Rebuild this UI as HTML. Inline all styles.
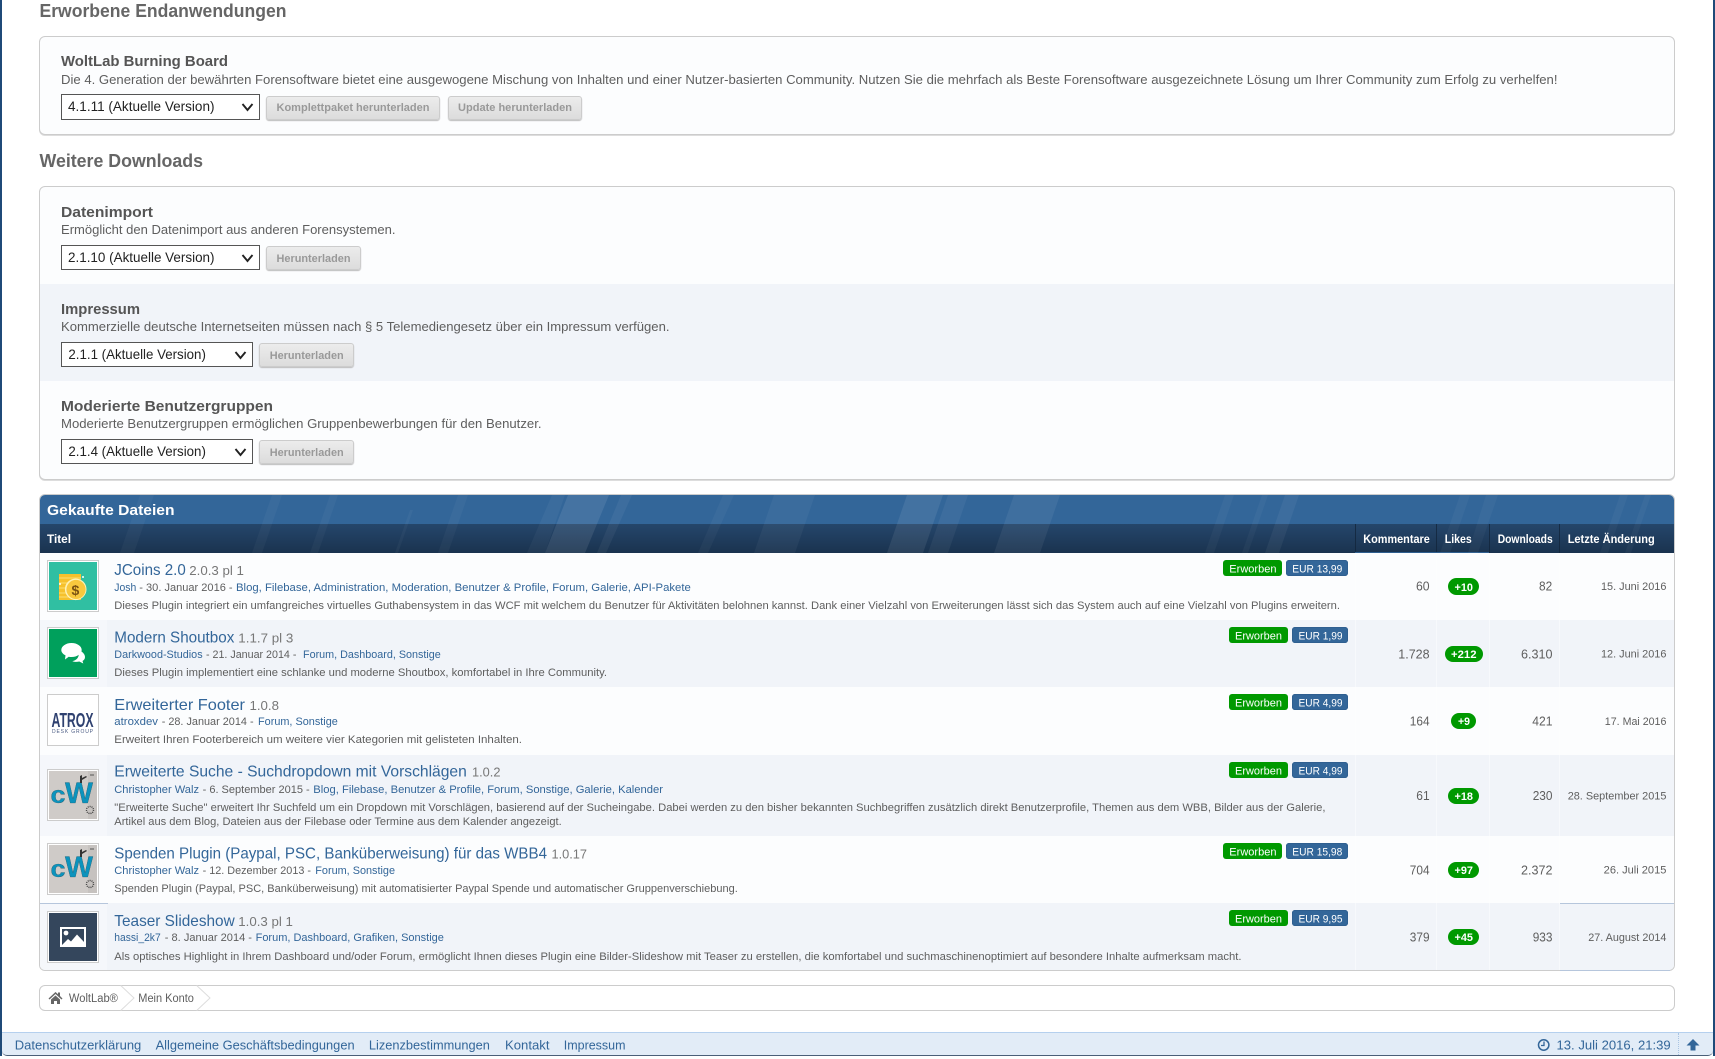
<!DOCTYPE html>
<html lang="de"><head><meta charset="utf-8"><title>Mein Konto</title>
<style>
html,body{margin:0;padding:0;width:1715px;height:1059px;overflow:hidden;background:#fff}
.a{position:absolute;box-sizing:border-box}
.box{border:1px solid #ccc;border-radius:6px;background:#fcfdfe;box-shadow:0 1px 0 #ddd}
.sel{background:#fff;border:1px solid #555}
.btn{background:linear-gradient(#ececec,#dcdcdc);border:1px solid #ccc;border-radius:3px;box-shadow:0 1px 1px #bbb}
.th{border:1px solid #ccc;background:#fff}
.g{background:#090;border-radius:3px}
.b{background:#369;border-radius:3px;box-shadow:inset 0 0 0 1px #2f5f90}
.p{background:#090;border-radius:9px}
.alt{background:#f1f4f9}
.alt1{background:#f5f7fb}
svg{position:absolute;left:0;top:0}
text{font-family:"Liberation Sans",sans-serif;fill:#5e5e5e;white-space:pre}
.h1{font-size:18px;font-weight:bold;fill:#666}
.h2{font-size:15px;font-weight:bold;fill:#555}
.d{font-size:13px}
.s{font-size:14px;fill:#222}
.bt{font-size:11px;font-weight:bold;fill:#999}
.w1{font-size:15px;font-weight:bold;fill:#fff}
.w2{font-size:11.5px;font-weight:bold;fill:#fff}
.t{font-size:16px;fill:#369}
.v{font-size:13px;fill:#777}
.m{font-size:11px}
.l{font-size:11px;fill:#369}
.x{font-size:11px}
.n{font-size:13px}
.bw{font-size:11px;fill:#fff}
.pw{font-size:11px;font-weight:bold;fill:#fff}
.f{font-size:13px;fill:#369}
.bc{font-size:11.5px}
</style></head><body>

<div class="a" style="left:0;top:0;width:2px;height:1056px;background:#1f4a78"></div>
<div class="a" style="left:1713px;top:0;width:2px;height:1056px;background:#1f4a78"></div>

<!-- Boxes -->
<div class="a box" style="left:39px;top:36px;width:1636px;height:99px"></div>
<div class="a box" style="left:39px;top:186px;width:1636px;height:294px"></div>
<div class="a alt" style="left:40px;top:284px;width:1634px;height:97px"></div>

<div class="a sel" style="left:61px;top:94px;width:199px;height:26px"></div>
<div class="a btn" style="left:266px;top:96px;width:174px;height:24px"></div>
<div class="a btn" style="left:448px;top:96px;width:134px;height:24px"></div>
<div class="a sel" style="left:61px;top:245px;width:199px;height:25px"></div>
<div class="a btn" style="left:266px;top:246px;width:95px;height:24px"></div>
<div class="a sel" style="left:61px;top:342px;width:192px;height:25px"></div>
<div class="a btn" style="left:259px;top:343px;width:95px;height:24px"></div>
<div class="a sel" style="left:61px;top:439px;width:192px;height:25px"></div>
<div class="a btn" style="left:259px;top:440px;width:95px;height:24px"></div>

<!-- Table -->
<div class="a" style="left:39px;top:494px;width:1636px;height:477px;border:1px solid #ccc;border-radius:6px;background:#fcfdfe;overflow:hidden">
  <div class="a" style="left:0;top:0;width:1634px;height:29px;background:#336699"></div>
  <div class="a" style="left:0;top:29px;width:1634px;height:29px;background:linear-gradient(#25466b,#1a334f)"></div>
  <div class="a alt" style="left:0;top:125px;width:1634px;height:67px"></div>
  <div class="a alt1" style="left:0;top:125px;width:67px;height:67px"></div>
  <div class="a alt" style="left:0;top:260px;width:1634px;height:81px"></div>
  <div class="a alt1" style="left:0;top:260px;width:67px;height:81px"></div>
  <div class="a alt" style="left:0;top:408px;width:1634px;height:67px"></div>
  <div class="a alt1" style="left:0;top:408px;width:67px;height:67px"></div>
  <div class="a" style="left:0;top:408px;width:68px;height:1px;background:#b6c6dc"></div>
  <div class="a" style="left:1520px;top:408px;width:114px;height:1px;background:#b6c6dc"></div>
  <div class="a" style="left:1315px;top:58px;width:1px;height:417px;background:rgba(255,255,255,.45)"></div>
  <div class="a" style="left:1396px;top:58px;width:1px;height:417px;background:rgba(255,255,255,.45)"></div>
  <div class="a" style="left:1449px;top:58px;width:1px;height:417px;background:rgba(255,255,255,.45)"></div>
  <div class="a" style="left:1519px;top:58px;width:1px;height:417px;background:rgba(255,255,255,.45)"></div>
  <div class="a" style="left:1315px;top:29px;width:1px;height:29px;background:rgba(18,36,58,.75)"></div>
  <div class="a" style="left:1396px;top:29px;width:1px;height:29px;background:rgba(18,36,58,.75)"></div>
  <div class="a" style="left:1449px;top:29px;width:1px;height:29px;background:rgba(18,36,58,.75)"></div>
  <div class="a" style="left:1519px;top:29px;width:1px;height:29px;background:rgba(18,36,58,.75)"></div>
  <div class="a" style="left:1315px;top:57px;width:134px;height:1px;background:#2f5f90"></div>
</div>

<!-- Thumbs -->
<div class="a th" style="left:47px;top:560px;width:52px;height:52px"></div>
<div class="a th" style="left:47px;top:627px;width:52px;height:52px"></div>
<div class="a th" style="left:47px;top:694px;width:52px;height:52px"></div>
<div class="a th" style="left:47px;top:769px;width:52px;height:52px"></div>
<div class="a th" style="left:47px;top:843px;width:52px;height:52px"></div>
<div class="a th" style="left:47px;top:911px;width:52px;height:52px"></div>

<!-- Badges -->
<div class="a g" style="left:1223px;top:560px;width:59px;height:16px"></div><div class="a b" style="left:1286px;top:560px;width:62px;height:16px"></div>
<div class="a g" style="left:1229px;top:627px;width:59px;height:16px"></div><div class="a b" style="left:1292px;top:627px;width:56px;height:16px"></div>
<div class="a g" style="left:1229px;top:694px;width:59px;height:16px"></div><div class="a b" style="left:1292px;top:694px;width:56px;height:16px"></div>
<div class="a g" style="left:1229px;top:762px;width:59px;height:16px"></div><div class="a b" style="left:1292px;top:762px;width:56px;height:16px"></div>
<div class="a g" style="left:1223px;top:843px;width:59px;height:16px"></div><div class="a b" style="left:1286px;top:843px;width:62px;height:16px"></div>
<div class="a g" style="left:1229px;top:910px;width:59px;height:16px"></div><div class="a b" style="left:1292px;top:910px;width:56px;height:16px"></div>

<!-- Pills -->
<div class="a p" style="left:1448px;top:578px;width:31px;height:17px"></div>
<div class="a p" style="left:1445px;top:646px;width:38px;height:16px"></div>
<div class="a p" style="left:1451px;top:713px;width:25px;height:16px"></div>
<div class="a p" style="left:1448px;top:788px;width:31px;height:16px"></div>
<div class="a p" style="left:1448px;top:862px;width:31px;height:16px"></div>
<div class="a p" style="left:1448px;top:929px;width:31px;height:16px"></div>

<!-- Breadcrumbs -->
<div class="a" style="left:39px;top:985px;width:1636px;height:26px;border:1px solid #ccc;border-radius:6px;background:#fff"></div>

<!-- Footer -->
<div class="a" style="left:2px;top:1032px;width:1711px;height:24px;background:#e2ecf7;border-top:1px solid #b5d0ee;border-bottom:1px solid #4a5f78;border-radius:0 0 5px 5px"></div>
<div class="a" style="left:1678px;top:1033px;width:0;height:22px;border-left:1px dotted #a9c4e2"></div>

<svg width="1715" height="1059" viewBox="0 0 1715 1059" xmlns="http://www.w3.org/2000/svg">
<defs><clipPath id="hc"><path d="M40 553V501q0-6 6-6H1668q6 0 6 6V553Z"/></clipPath></defs>

<!-- header streaks -->
<g clip-path="url(#hc)" fill="#fff">
<path opacity=".035" d="M140 495h14l-20 58h-14zM272 495h10l-20 58h-10zM330 495h8l-20 58h-8z"/>
<path opacity=".035" d="M458 495h10l-20 58h-10zM410 510h3l-15 43h-3z"/>
<path opacity=".04" d="M552 495h13l-20 58h-18z"/>
<path opacity=".09" d="M568 495h41l-24 58h-40z"/>
<path opacity=".05" d="M621 495h11l-26 58h-9z"/>
<path opacity=".035" d="M723 495h11l-26 58h-10z"/>
<path opacity=".045" d="M774 495h41l-20 58h-41z"/>
<path opacity=".08" d="M907 495h36l-20 58h-36z"/>
<path opacity=".05" d="M948 495h20l-20 58h-20z"/>
<path opacity=".06" d="M1014 495h46l-20 58h-46z"/>
<path opacity=".035" d="M1225 495h9l-20 58h-9zM1262 495h6l-20 58h-6z"/>
<path opacity=".05" d="M1285 495h14l-20 58h-14z"/>
<path opacity=".035" d="M1460 495h10l-20 58h-10zM1486 495h12l-20 58h-10z"/>
<path opacity=".035" d="M1620 495h8l-20 58h-8zM1645 495h6l-20 58h-6z"/>
</g>

<!-- top section -->
<text class="h1" x="39.5" y="17" textLength="247" lengthAdjust="spacingAndGlyphs">Erworbene Endanwendungen</text>
<text class="h2" x="61" y="66" textLength="167" lengthAdjust="spacingAndGlyphs">WoltLab Burning Board</text>
<text class="d" x="61" y="84" textLength="1496.5" lengthAdjust="spacingAndGlyphs">Die 4. Generation der bewährten Forensoftware bietet eine ausgewogene Mischung von Inhalten und einer Nutzer-basierten Community. Nutzen Sie die mehrfach als Beste Forensoftware ausgezeichnete Lösung um Ihrer Community zum Erfolg zu verhelfen!</text>
<text class="s" x="68" y="111" textLength="146.5" lengthAdjust="spacingAndGlyphs">4.1.11 (Aktuelle Version)</text>
<text class="bt" x="276.5" y="111" textLength="153" lengthAdjust="spacingAndGlyphs">Komplettpaket herunterladen</text>
<text class="bt" x="458" y="111" textLength="114" lengthAdjust="spacingAndGlyphs">Update herunterladen</text>

<text class="h1" x="39.5" y="167" textLength="163.5" lengthAdjust="spacingAndGlyphs">Weitere Downloads</text>
<text class="h2" x="61" y="217" textLength="92" lengthAdjust="spacingAndGlyphs">Datenimport</text>
<text class="d" x="61" y="234" textLength="334.5" lengthAdjust="spacingAndGlyphs">Ermöglicht den Datenimport aus anderen Forensystemen.</text>
<text class="s" x="68" y="262" textLength="146.5" lengthAdjust="spacingAndGlyphs">2.1.10 (Aktuelle Version)</text>
<text class="bt" x="276.5" y="262" textLength="74" lengthAdjust="spacingAndGlyphs">Herunterladen</text>

<text class="h2" x="61" y="314" textLength="79" lengthAdjust="spacingAndGlyphs">Impressum</text>
<text class="d" x="61" y="331" textLength="608.5" lengthAdjust="spacingAndGlyphs">Kommerzielle deutsche Internetseiten müssen nach § 5 Telemediengesetz über ein Impressum verfügen.</text>
<text class="s" x="68.4" y="359" textLength="137.5" lengthAdjust="spacingAndGlyphs">2.1.1 (Aktuelle Version)</text>
<text class="bt" x="269.7" y="359" textLength="74" lengthAdjust="spacingAndGlyphs">Herunterladen</text>

<text class="h2" x="61" y="411" textLength="212" lengthAdjust="spacingAndGlyphs">Moderierte Benutzergruppen</text>
<text class="d" x="61" y="428" textLength="480.5" lengthAdjust="spacingAndGlyphs">Moderierte Benutzergruppen ermöglichen Gruppenbewerbungen für den Benutzer.</text>
<text class="s" x="68.4" y="456" textLength="137.5" lengthAdjust="spacingAndGlyphs">2.1.4 (Aktuelle Version)</text>
<text class="bt" x="269.7" y="456" textLength="74" lengthAdjust="spacingAndGlyphs">Herunterladen</text>

<!-- chevrons -->
<g fill="none" stroke="#222" stroke-width="1.9">
<path d="M242.5 104l5 6 5-6"/><path d="M242.5 255l5 6 5-6"/><path d="M235.5 352l5 6 5-6"/><path d="M235.5 449l5 6 5-6"/>
</g>

<!-- table head -->
<text class="w1" x="47" y="515" textLength="127.5" lengthAdjust="spacingAndGlyphs">Gekaufte Dateien</text>
<text class="w2" x="47" y="543" textLength="24" lengthAdjust="spacingAndGlyphs">Titel</text>
<text class="w2" x="1363.3" y="543" textLength="66.5" lengthAdjust="spacingAndGlyphs">Kommentare</text>
<text class="w2" x="1444.8" y="543" textLength="27" lengthAdjust="spacingAndGlyphs">Likes</text>
<text class="w2" x="1497.7" y="543" textLength="55" lengthAdjust="spacingAndGlyphs">Downloads</text>
<text class="w2" x="1567.7" y="543" textLength="87" lengthAdjust="spacingAndGlyphs">Letzte Änderung</text>

<!-- row 1 -->
<text class="t" x="114.3" y="575" textLength="71.5" lengthAdjust="spacingAndGlyphs">JCoins 2.0</text>
<text class="v" x="189.3" y="575" textLength="54.6" lengthAdjust="spacingAndGlyphs">2.0.3 pl 1</text>
<text class="l" x="114.3" y="591" textLength="22" lengthAdjust="spacingAndGlyphs">Josh</text>
<text class="m" x="139.3" y="591" textLength="93.3" lengthAdjust="spacingAndGlyphs">- 30. Januar 2016 -</text>
<text class="l" x="236" y="591" textLength="454.8" lengthAdjust="spacingAndGlyphs">Blog, Filebase, Administration, Moderation, Benutzer &amp; Profile, Forum, Galerie, API-Pakete</text>
<text class="m" x="114.3" y="609" textLength="1225.7" lengthAdjust="spacingAndGlyphs">Dieses Plugin integriert ein umfangreiches virtuelles Guthabensystem in das WCF mit welchem du Benutzer für Aktivitäten belohnen kannst. Dank einer Vielzahl von Erweiterungen lässt sich das System auch auf eine Vielzahl von Plugins erweitern.</text>
<!-- row 2 -->
<text class="t" x="114.3" y="642.5" textLength="120" lengthAdjust="spacingAndGlyphs">Modern Shoutbox</text>
<text class="v" x="238.3" y="642.5" textLength="55" lengthAdjust="spacingAndGlyphs">1.1.7 pl 3</text>
<text class="l" x="114.3" y="658" textLength="88.3" lengthAdjust="spacingAndGlyphs">Darkwood-Studios</text>
<text class="m" x="206" y="658" textLength="90.4" lengthAdjust="spacingAndGlyphs">- 21. Januar 2014 -</text>
<text class="l" x="303" y="658" textLength="137.8" lengthAdjust="spacingAndGlyphs">Forum, Dashboard, Sonstige</text>
<text class="m" x="114.3" y="676" textLength="492.7" lengthAdjust="spacingAndGlyphs">Dieses Plugin implementiert eine schlanke und moderne Shoutbox, komfortabel in Ihre Community.</text>
<!-- row 3 -->
<text class="t" x="114.3" y="710" textLength="130.7" lengthAdjust="spacingAndGlyphs">Erweiterter Footer</text>
<text class="v" x="249.5" y="710" textLength="29.5" lengthAdjust="spacingAndGlyphs">1.0.8</text>
<text class="l" x="114.3" y="725" textLength="43.7" lengthAdjust="spacingAndGlyphs">atroxdev</text>
<text class="m" x="161.7" y="725" textLength="91.9" lengthAdjust="spacingAndGlyphs">- 28. Januar 2014 -</text>
<text class="l" x="258" y="725" textLength="79.8" lengthAdjust="spacingAndGlyphs">Forum, Sonstige</text>
<text class="m" x="114.3" y="743" textLength="407.7" lengthAdjust="spacingAndGlyphs">Erweitert Ihren Footerbereich um weitere vier Kategorien mit gelisteten Inhalten.</text>
<!-- row 4 -->
<text class="t" x="114.3" y="776.5" textLength="352.5" lengthAdjust="spacingAndGlyphs">Erweiterte Suche - Suchdropdown mit Vorschlägen</text>
<text class="v" x="472" y="776.5" textLength="28.5" lengthAdjust="spacingAndGlyphs">1.0.2</text>
<text class="l" x="114.3" y="793" textLength="84.7" lengthAdjust="spacingAndGlyphs">Christopher Walz</text>
<text class="m" x="202.6" y="793" textLength="107.1" lengthAdjust="spacingAndGlyphs">- 6. September 2015 -</text>
<text class="l" x="313.3" y="793" textLength="349.7" lengthAdjust="spacingAndGlyphs">Blog, Filebase, Benutzer &amp; Profile, Forum, Sonstige, Galerie, Kalender</text>
<text class="m" x="114.3" y="811" textLength="1211.2" lengthAdjust="spacingAndGlyphs">"Erweiterte Suche" erweitert Ihr Suchfeld um ein Dropdown mit Vorschlägen, basierend auf der Sucheingabe. Dabei werden zu den bisher bekannten Suchbegriffen zusätzlich direkt Benutzerprofile, Themen aus dem WBB, Bilder aus der Galerie,</text>
<text class="m" x="114.3" y="825" textLength="447.4" lengthAdjust="spacingAndGlyphs">Artikel aus dem Blog, Dateien aus der Filebase oder Termine aus dem Kalender angezeigt.</text>
<!-- row 5 -->
<text class="t" x="114.3" y="858.5" textLength="432.7" lengthAdjust="spacingAndGlyphs">Spenden Plugin (Paypal, PSC, Banküberweisung) für das WBB4</text>
<text class="v" x="551.5" y="858.5" textLength="35.5" lengthAdjust="spacingAndGlyphs">1.0.17</text>
<text class="l" x="114.3" y="874" textLength="84.7" lengthAdjust="spacingAndGlyphs">Christopher Walz</text>
<text class="m" x="202.6" y="874" textLength="108.4" lengthAdjust="spacingAndGlyphs">- 12. Dezember 2013 -</text>
<text class="l" x="315.3" y="874" textLength="79.7" lengthAdjust="spacingAndGlyphs">Forum, Sonstige</text>
<text class="m" x="114.3" y="892" textLength="623.5" lengthAdjust="spacingAndGlyphs">Spenden Plugin (Paypal, PSC, Banküberweisung) mit automatisierter Paypal Spende und automatischer Gruppenverschiebung.</text>
<!-- row 6 -->
<text class="t" x="114.3" y="926" textLength="120.4" lengthAdjust="spacingAndGlyphs">Teaser Slideshow</text>
<text class="v" x="238.3" y="926" textLength="54.6" lengthAdjust="spacingAndGlyphs">1.0.3 pl 1</text>
<text class="l" x="114.3" y="941" textLength="46.4" lengthAdjust="spacingAndGlyphs">hassi_2k7</text>
<text class="m" x="164.8" y="941" textLength="87.2" lengthAdjust="spacingAndGlyphs">- 8. Januar 2014 -</text>
<text class="l" x="255.6" y="941" textLength="188.3" lengthAdjust="spacingAndGlyphs">Forum, Dashboard, Grafiken, Sonstige</text>
<text class="m" x="114.3" y="960" textLength="1127.2" lengthAdjust="spacingAndGlyphs">Als optisches Highlight in Ihrem Dashboard und/oder Forum, ermöglicht Ihnen dieses Plugin eine Bilder-Slideshow mit Teaser zu erstellen, die komfortabel und suchmaschinenoptimiert auf besondere Inhalte aufmerksam macht.</text>

<!-- badges -->
<text class="bw" x="1229.3" y="572.3" textLength="47.2" lengthAdjust="spacingAndGlyphs">Erworben</text><text class="bw" x="1292.3" y="572.3" textLength="50" lengthAdjust="spacingAndGlyphs">EUR 13,99</text>
<text class="bw" x="1235" y="639.3" textLength="47" lengthAdjust="spacingAndGlyphs">Erworben</text><text class="bw" x="1298.5" y="639.3" textLength="44" lengthAdjust="spacingAndGlyphs">EUR 1,99</text>
<text class="bw" x="1235" y="706.3" textLength="47" lengthAdjust="spacingAndGlyphs">Erworben</text><text class="bw" x="1298.5" y="706.3" textLength="44" lengthAdjust="spacingAndGlyphs">EUR 4,99</text>
<text class="bw" x="1235" y="774.3" textLength="47" lengthAdjust="spacingAndGlyphs">Erworben</text><text class="bw" x="1298.5" y="774.3" textLength="44" lengthAdjust="spacingAndGlyphs">EUR 4,99</text>
<text class="bw" x="1229.3" y="855.3" textLength="47.2" lengthAdjust="spacingAndGlyphs">Erworben</text><text class="bw" x="1292.3" y="855.3" textLength="50" lengthAdjust="spacingAndGlyphs">EUR 15,98</text>
<text class="bw" x="1235" y="922.3" textLength="47" lengthAdjust="spacingAndGlyphs">Erworben</text><text class="bw" x="1298.5" y="922.3" textLength="44" lengthAdjust="spacingAndGlyphs">EUR 9,95</text>

<!-- counts -->
<text class="n" x="1416" y="590.5" textLength="13.6" lengthAdjust="spacingAndGlyphs">60</text>
<text class="pw" x="1454.5" y="591" textLength="18.5" lengthAdjust="spacingAndGlyphs">+10</text>
<text class="n" x="1539" y="590.5" textLength="13.2" lengthAdjust="spacingAndGlyphs">82</text>
<text class="x" x="1601" y="590" textLength="65.4" lengthAdjust="spacingAndGlyphs">15. Juni 2016</text>

<text class="n" x="1398.3" y="658.5" textLength="31.3" lengthAdjust="spacingAndGlyphs">1.728</text>
<text class="pw" x="1451" y="658" textLength="25.5" lengthAdjust="spacingAndGlyphs">+212</text>
<text class="n" x="1521" y="658.5" textLength="31.5" lengthAdjust="spacingAndGlyphs">6.310</text>
<text class="x" x="1601" y="657.5" textLength="65.4" lengthAdjust="spacingAndGlyphs">12. Juni 2016</text>

<text class="n" x="1409.8" y="725.5" textLength="19.8" lengthAdjust="spacingAndGlyphs">164</text>
<text class="pw" x="1458" y="725" textLength="12" lengthAdjust="spacingAndGlyphs">+9</text>
<text class="n" x="1532.3" y="725.5" textLength="20.2" lengthAdjust="spacingAndGlyphs">421</text>
<text class="x" x="1604.8" y="725" textLength="61.6" lengthAdjust="spacingAndGlyphs">17. Mai 2016</text>

<text class="n" x="1416.3" y="800" textLength="13.3" lengthAdjust="spacingAndGlyphs">61</text>
<text class="pw" x="1454.5" y="800" textLength="18.5" lengthAdjust="spacingAndGlyphs">+18</text>
<text class="n" x="1532.7" y="800" textLength="19.8" lengthAdjust="spacingAndGlyphs">230</text>
<text class="x" x="1567.7" y="799.5" textLength="98.7" lengthAdjust="spacingAndGlyphs">28. September 2015</text>

<text class="n" x="1409.8" y="874.5" textLength="19.8" lengthAdjust="spacingAndGlyphs">704</text>
<text class="pw" x="1454.5" y="874" textLength="18.5" lengthAdjust="spacingAndGlyphs">+97</text>
<text class="n" x="1521" y="874.5" textLength="31.5" lengthAdjust="spacingAndGlyphs">2.372</text>
<text class="x" x="1603.7" y="873.5" textLength="62.7" lengthAdjust="spacingAndGlyphs">26. Juli 2015</text>

<text class="n" x="1409.8" y="941.5" textLength="19.8" lengthAdjust="spacingAndGlyphs">379</text>
<text class="pw" x="1454.5" y="941" textLength="18.5" lengthAdjust="spacingAndGlyphs">+45</text>
<text class="n" x="1532.7" y="941.5" textLength="19.8" lengthAdjust="spacingAndGlyphs">933</text>
<text class="x" x="1588.2" y="941" textLength="78.2" lengthAdjust="spacingAndGlyphs">27. August 2014</text>

<!-- thumb 1: coins -->
<rect x="49" y="562" width="48" height="48" fill="#30bfa2"/>
<rect x="59" y="574" width="22" height="26" fill="#f6c12c"/>
<path d="M59 578h22M59 583h22M59 588h22M59 593h22M59 597h22" stroke="#fbd964" stroke-width="1.2"/>
<circle cx="75.7" cy="589.3" r="10.8" fill="#fff3b8"/>
<circle cx="76" cy="589.5" r="9.6" fill="#f8c83e"/>
<text x="71.5" y="595" font-size="14" font-weight="bold" style="fill:#7a5212">$</text>
<circle cx="60" cy="584" r="1" fill="#fff"/><circle cx="83" cy="577" r="1" fill="#fff"/>

<!-- thumb 2: bubbles -->
<rect x="49" y="629" width="48" height="48" fill="#00a05c"/>
<path d="M78 650c4 1 7 4 7 7 0 2-1 3-2.5 4l.8 2.500-4-2c-2 .5-5 .5-7-.3 5-1 8-5 5.700-11.200z" fill="#fff"/>
<path d="M71.500 643c5.700 0 10.200 3.200 10.200 7s-4.500 7-10.200 7c-1 0-2-.1-2.800-.3l-3.700 2.800 .5-4.100c-2.500-1.300-4.200-3.200-4.200-5.400 0-3.800 4.600-7 10.200-7z" fill="#fff"/>

<!-- thumb 3: atrox -->
<text x="51.5" y="727" font-size="20.5" font-weight="bold" textLength="42" lengthAdjust="spacingAndGlyphs" style="fill:#2f4170">ATROX</text>
<text x="52" y="733" font-size="5" textLength="41" lengthAdjust="spacing" style="fill:#4a5b83">DESK GROUP</text>

<!-- thumb 4 & 5: cW -->
<g>
<rect x="49" y="771" width="48" height="48" fill="#cfcbc8"/>
<rect x="88" y="771" width="9" height="48" fill="#c6c2bf"/>
<text x="50.5" y="803" font-size="24" font-weight="bold" textLength="15" lengthAdjust="spacingAndGlyphs" style="fill:#0c93bd;stroke:#24525f;stroke-width:.3">c</text>
<text x="65" y="803" font-size="30" font-weight="bold" textLength="28" lengthAdjust="spacingAndGlyphs" style="fill:#0c93bd;stroke:#24525f;stroke-width:.3">W</text>
<path d="M80 776v7h2v-3l5-3-1-1-4 2v-3z" fill="#333"/><path d="M90 775h4" stroke="#555" stroke-width="1"/>
<circle cx="90" cy="810" r="3.500" fill="none" stroke="#444" stroke-width="1.400" stroke-dasharray="1 1"/>
</g>
<g>
<rect x="49" y="845" width="48" height="48" fill="#cfcbc8"/>
<rect x="88" y="845" width="9" height="48" fill="#c6c2bf"/>
<text x="50.5" y="877" font-size="24" font-weight="bold" textLength="15" lengthAdjust="spacingAndGlyphs" style="fill:#0c93bd;stroke:#24525f;stroke-width:.3">c</text>
<text x="65" y="877" font-size="30" font-weight="bold" textLength="28" lengthAdjust="spacingAndGlyphs" style="fill:#0c93bd;stroke:#24525f;stroke-width:.3">W</text>
<path d="M80 850v7h2v-3l5-3-1-1-4 2v-3z" fill="#333"/><path d="M90 849h4" stroke="#555" stroke-width="1"/>
<circle cx="90" cy="884" r="3.500" fill="none" stroke="#444" stroke-width="1.400" stroke-dasharray="1 1"/>
</g>

<!-- thumb 6: picture -->
<rect x="49" y="913" width="48" height="48" fill="#34465c"/>
<rect x="61" y="928" width="24" height="18" fill="none" stroke="#fff" stroke-width="2"/>
<circle cx="66" cy="933" r="2.400" fill="#fff"/>
<path d="M62 945l6-6 3 2.500 6-7 7 7.500v3z" fill="#fff"/>

<!-- last row bottom line -->
<path d="M1560 970.500H1670" stroke="#b6c6dc"/>

<!-- breadcrumbs -->
<path d="M120.700 985.500L134 998 120.700 1010.500M196.700 985.500L210 998 196.700 1010.500" fill="none" stroke="#ddd"/>
<path d="M48.500 998.500L55.500 992 58 994.300V992.500H60V996L62.500 998.500 61.500 999.500 55.500 994 49.500 999.500ZM51 999.500L55.500 995.500 60 999.500V1004H57V1001H54V1004H51Z" fill="#666"/>
<text class="bc" x="68.9" y="1002" textLength="49" lengthAdjust="spacingAndGlyphs">WoltLab®</text>
<text class="bc" x="138.3" y="1002" textLength="55.6" lengthAdjust="spacingAndGlyphs">Mein Konto</text>

<!-- footer -->
<text class="f" x="14.8" y="1049.5" textLength="126.5" lengthAdjust="spacingAndGlyphs">Datenschutzerklärung</text>
<text class="f" x="155.6" y="1049.5" textLength="199" lengthAdjust="spacingAndGlyphs">Allgemeine Geschäftsbedingungen</text>
<text class="f" x="368.9" y="1049.5" textLength="121" lengthAdjust="spacingAndGlyphs">Lizenzbestimmungen</text>
<text class="f" x="505" y="1049.5" textLength="44.5" lengthAdjust="spacingAndGlyphs">Kontakt</text>
<text class="f" x="563.8" y="1049.5" textLength="61.7" lengthAdjust="spacingAndGlyphs">Impressum</text>
<circle cx="1543.7" cy="1045" r="5.2" fill="none" stroke="#369" stroke-width="1.5"/>
<path d="M1544 1041.500V1045.500H1541" fill="none" stroke="#369" stroke-width="1.3"/>
<text class="f" x="1556.5" y="1049.5" textLength="114.2" lengthAdjust="spacingAndGlyphs">13. Juli 2016, 21:39</text>
<path d="M1693 1039L1699.500 1045.500H1695.500V1050.500H1690.500V1045.500H1686.500Z" fill="#369"/>
</svg>
</body></html>
